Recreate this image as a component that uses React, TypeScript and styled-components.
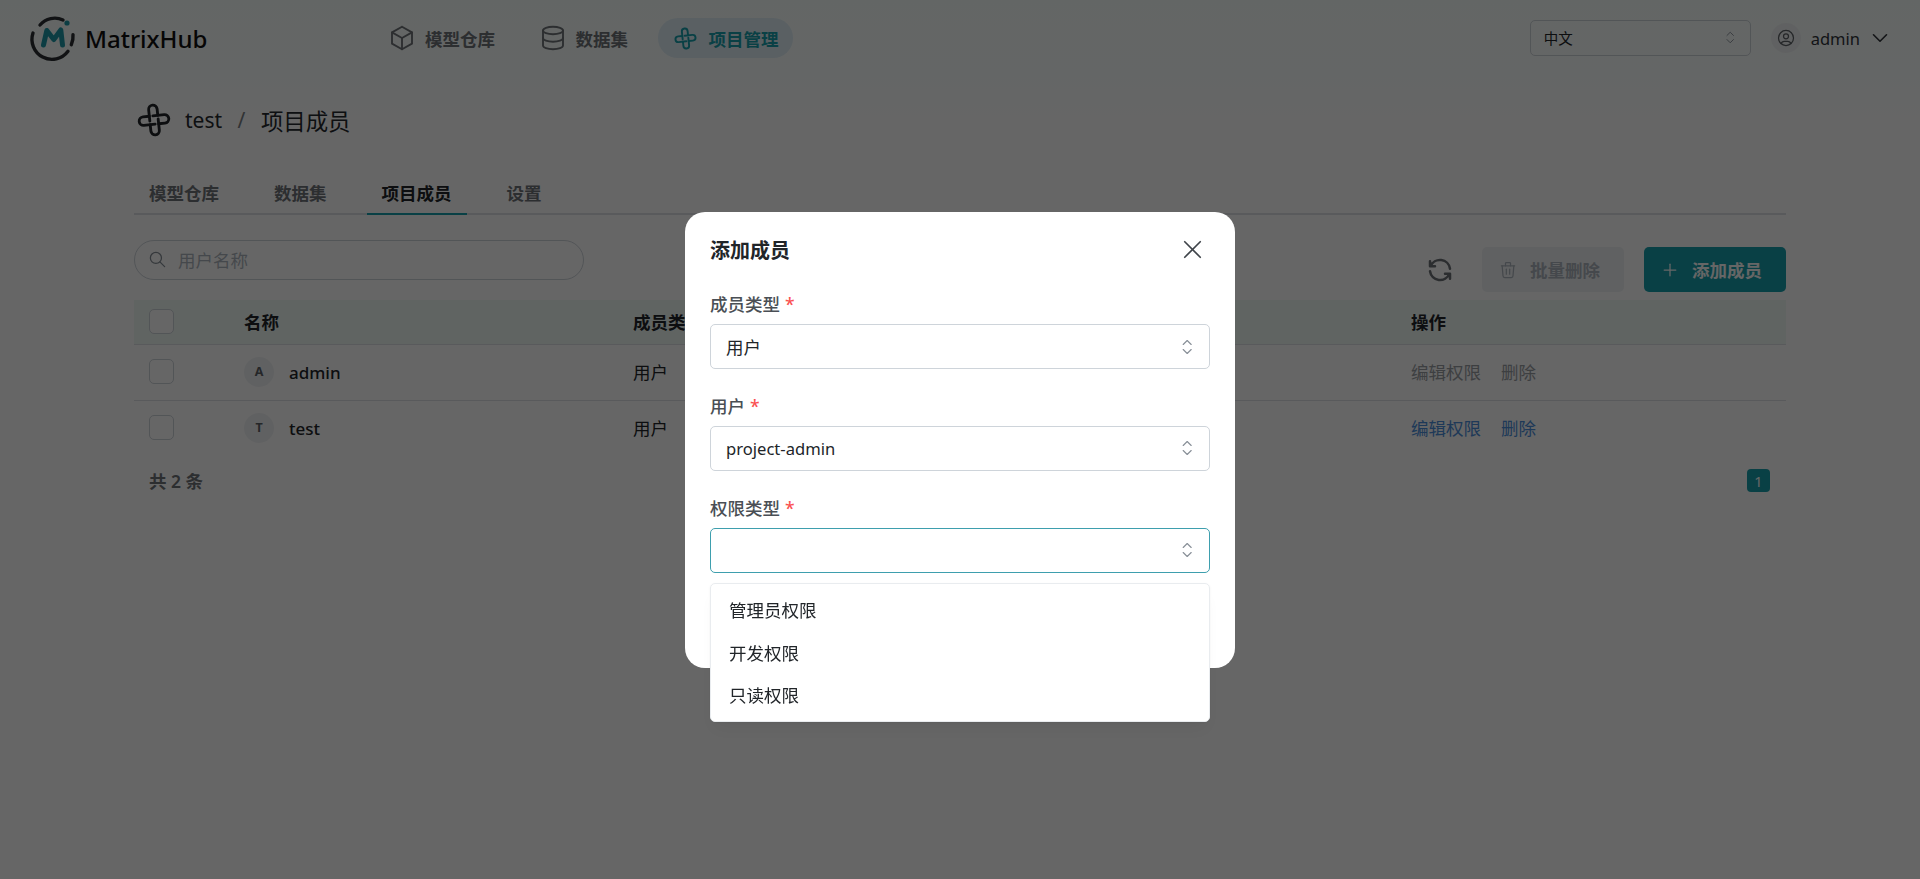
import React from 'react';
import styled, { createGlobalStyle } from 'styled-components';
import {
  TbBox,
  TbChevronDown,
  TbDatabase,
  TbPlus,
  TbRefresh,
  TbSearch,
  TbTrash,
  TbUserCircle,
  TbX,
} from 'react-icons/tb';

const PRIMARY = '#18a0ac';
const FONT = '"Noto Sans", "Noto Sans CJK SC", sans-serif';

const GlobalStyle = createGlobalStyle`
  html, body {
    margin: 0;
    padding: 0;
    background: #fff;
    overflow: hidden;
  }
  * {
    box-sizing: border-box;
  }
  body {
    font-family: ${FONT};
    font-size: 17.5px;
    color: #212529;
  }
`;

const Page = styled.div`
  height: 879px;
  background: linear-gradient(180deg, #f8fffd 0, #fbfffe 76px, #fff 130px);
`;

const Header = styled.header`
  height: 76px;
  display: flex;
  align-items: center;
  padding: 0 27px 0 30px;
`;

const Brand = styled.div`
  width: 344px;
  display: flex;
  align-items: center;
  gap: 15px;
`;

const BrandName = styled.span`
  font-size: 24px;
  font-weight: 500;
  color: #111;
  line-height: 1;
  margin-top: 2px;
`;

const Nav = styled.nav`
  display: flex;
  gap: 15.5px;
`;

const NavItem = styled.a<{ $active?: boolean }>`
  height: 40px;
  display: flex;
  align-items: center;
  gap: 8px;
  padding: 0 14px 0 13px;
  border-radius: 20px;
  font-weight: 600;
  font-size: 17.5px;
  color: ${p => (p.$active ? PRIMARY : '#6f7378')};
  background: ${p => (p.$active ? '#e0f0f8' : 'transparent')};
`;

const NavGlyph = styled.span`
  width: 30px;
  height: 30px;
  display: flex;
  align-items: center;
  justify-content: center;
`;

const HeaderRight = styled.div`
  margin-left: auto;
  display: flex;
  align-items: center;
`;

const LangSelect = styled.div`
  width: 221px;
  height: 36px;
  display: flex;
  align-items: center;
  justify-content: space-between;
  padding: 0 15px 1px 13px;
  border: 1px solid #ced4da;
  border-radius: 5px;
  font-size: 14.5px;
  margin-right: 20px;
`;

const AvatarCircle = styled.div`
  width: 30px;
  height: 30px;
  border-radius: 50%;
  background: #f1f3f5;
  display: flex;
  align-items: center;
  justify-content: center;
  color: #5c6166;
  font-size: 12.5px;
  font-weight: 700;
`;

const UserName = styled.span`
  margin: 0 7px 0 10px;
  font-size: 16.5px;
  color: #30343a;
`;

const Content = styled.main`
  width: 1652px;
  margin: 0 auto;
`;

const Breadcrumb = styled.div`
  display: flex;
  align-items: center;
  height: 34px;
  margin-top: 27px;
  margin-left: 3px;
  font-size: 22.4px;
  color: #25292d;
`;

const CrumbProject = styled.span`
  margin-left: 14px;
  font-size: 21px;
`;

const CrumbSlash = styled.span`
  margin: 0 15.5px;
  font-size: 21px;
  color: #7a7f85;
`;

const TabBar = styled.div`
  display: flex;
  gap: 25px;
  height: 44px;
  margin-top: 34px;
  border-bottom: 2px solid #dee2e6;
`;

const Tab = styled.a<{ $active?: boolean }>`
  padding: 0 15px;
  height: 44px;
  display: flex;
  align-items: center;
  font-weight: 600;
  color: ${p => (p.$active ? '#212529' : '#6f7378')};
  border-bottom: 2px solid ${p => (p.$active ? PRIMARY : 'transparent')};
`;

const Toolbar = styled.div`
  display: flex;
  justify-content: space-between;
  align-items: flex-start;
  height: 60px;
  margin-top: 25px;
`;

const SearchBox = styled.div`
  width: 450px;
  height: 40px;
  display: flex;
  align-items: center;
  gap: 11px;
  padding: 0 0 1px 13px;
  border: 1px solid #ced4da;
  border-radius: 20px;
  color: #adb5bd;
`;

const Actions = styled.div`
  display: flex;
  align-items: center;
  padding-top: 7px;
`;

const RefreshButton = styled.div`
  display: flex;
  color: #6b7076;
  margin-right: 27px;
`;

const ActionButton = styled.div<{ $primary?: boolean }>`
  width: 142px;
  height: 45px;
  display: flex;
  align-items: center;
  gap: 12px;
  padding-left: 16px;
  border-radius: 5px;
  font-weight: 600;
  margin-left: ${p => (p.$primary ? '20px' : '0')};
  background: ${p => (p.$primary ? PRIMARY : '#f1f3f5')};
  color: ${p => (p.$primary ? '#fff' : '#adb5bd')};
`;

const Table = styled.table`
  width: 100%;
  table-layout: fixed;
  border-collapse: collapse;
`;

const HeadRow = styled.tr`
  height: 44px;
  background: #f1faf6;
  border-bottom: 1px solid #dee2e6;
`;

const BodyRow = styled.tr<{ $last?: boolean }>`
  height: 56px;
  border-bottom: ${p => (p.$last ? 'none' : '1px solid #dee2e6')};
`;

const HeadCell = styled.th`
  padding: 0;
  text-align: left;
  font-weight: 700;
  font-size: 17.5px;
  color: #212529;
`;

const Cell = styled.td`
  padding: 0 0 1px;
  font-size: 17.5px;
  color: #212529;
`;

const CheckCell = styled.div`
  padding-left: 15px;
  display: flex;
  align-items: center;
`;

const CheckBox = styled.span`
  width: 25px;
  height: 25px;
  border: 1px solid #ced4da;
  border-radius: 5px;
  background: #fff;
`;

const NameCell = styled.div`
  display: flex;
  align-items: center;
  gap: 15px;
  font-weight: 500;
`;

const MemberName = styled.span`
  font-size: 17px;
  margin-top: 1px;
`;

const LinkRow = styled.div`
  display: flex;
  gap: 20px;
`;

const TableLink = styled.a<{ $disabled?: boolean }>`
  color: ${p => (p.$disabled ? '#9a9ea3' : '#4c8fdc')};
`;

const TableFooter = styled.div`
  display: flex;
  align-items: center;
  justify-content: space-between;
  padding: 12px 16px 0 15px;
`;

const Total = styled.span`
  font-weight: 600;
  color: #6f7378;
`;

const PageNumber = styled.span`
  width: 23px;
  height: 23px;
  display: flex;
  align-items: center;
  justify-content: center;
  border-radius: 4px;
  background: ${PRIMARY};
  color: #fff;
  font-size: 14.5px;
`;

const Overlay = styled.div`
  position: fixed;
  inset: 0;
  background: rgba(0, 0, 0, 0.6);
  display: flex;
  align-items: center;
  justify-content: center;
`;

const Modal = styled.div`
  width: 550px;
  background: #fff;
  border-radius: 20px;
  padding: 0 25px 95px;
`;

const ModalHeader = styled.div`
  height: 80.5px;
  display: flex;
  align-items: center;
  justify-content: space-between;
  padding-bottom: 4px;
`;

const ModalTitle = styled.h2`
  margin: 0;
  font-size: 20px;
  font-weight: 700;
  color: #212529;
`;

const CloseButton = styled.div`
  display: flex;
  color: #3f444a;
  margin-right: 2px;
`;

const Field = styled.div`
  position: relative;
  & + & {
    margin-top: 24.75px;
  }
`;

const Label = styled.label`
  display: block;
  height: 25px;
  line-height: 25px;
  margin-bottom: 7px;
  font-size: 17.5px;
  font-weight: 500;
  color: #4a4f55;
`;

const Required = styled.span`
  color: #fa5252;
  margin-left: 5px;
`;

const SelectBox = styled.div<{ $focused?: boolean }>`
  height: 45px;
  display: flex;
  align-items: center;
  justify-content: space-between;
  padding: 0 17px 0 15px;
  border: 1px solid ${p => (p.$focused ? '#3e9fae' : '#ced4da')};
  border-radius: 5px;
  font-size: 17.5px;
  color: #212529;
`;

const LatinValue = styled.span`
  font-size: 16.6px;
  margin-top: 1px;
`;

const Dropdown = styled.ul`
  position: absolute;
  top: calc(100% + 10px);
  left: 0;
  right: 0;
  margin: 0;
  padding: 5px;
  list-style: none;
  background: #fff;
  border: 1px solid #e9ecef;
  border-radius: 5px;
  box-shadow: 0 1px 3px rgba(0, 0, 0, 0.05), 0 10px 15px -5px rgba(0, 0, 0, 0.05);
`;

const Option = styled.li`
  height: 42.5px;
  display: flex;
  align-items: center;
  padding-left: 13px;
  font-size: 17.5px;
  color: #212529;
`;

const MatrixLogo = () => (
  <svg width="52" height="50" viewBox="0 0 52 50" fill="none" style={{ margin: '-3px -10px -3px -2px' }}>
    <g stroke="#2b2f33" strokeWidth="3.4" strokeLinecap="round">
      <path d="M12 12 A19.5 19.5 0 0 1 35 7" />
      <path d="M5 20 A20 20 0 0 0 40 38.3" />
      <path d="M45 21.7 A20 20 0 0 1 43.3 31.7" />
    </g>
    <path d="M15.5 32 L18.8 17.5 L25.8 26.5 L32.8 17 L34.5 32" stroke="#1e9aa8" strokeWidth="5" strokeLinejoin="round" strokeLinecap="round" />
    <circle cx="39" cy="10" r="2.6" fill="#1e9aa8" />
  </svg>
);

const KnotIcon = ({ size, color, width = 2 }: { size: number; color: string; width?: number }) => (
  <svg width={size} height={size} viewBox="0 0 24 24" fill="none" stroke={color} strokeWidth={width} strokeLinecap="round">
    <g transform="rotate(-6 12 12)">
      <path d="M9 12.5V4.5a3 3 0 0 1 6 0V9" />
      <path d="M11.5 9h7.999a3 3 0 0 1 0 6H15" />
      <path d="M15 11.5v8a3 3 0 0 1-6 0V15" />
      <path d="M12.5 15H4.5a3 3 0 0 1 0-6H9" />
    </g>
  </svg>
);

const SelectorIcon = ({ size = 16 }: { size?: number }) => (
  <svg width={size * 0.65} height={size} viewBox="0 0 10 16" fill="none" stroke="#868e96" strokeWidth="1.1" strokeLinecap="round" strokeLinejoin="round">
    <path d="M1 5.5 5 1.5l4 4" />
    <path d="M1 10.5l4 4 4-4" />
  </svg>
);

const members = [
  { name: 'admin', initial: 'A', locked: true },
  { name: 'test', initial: 'T', locked: false },
];

const App = () => (
  <Page>
    <GlobalStyle />
    <Header>
      <Brand>
        <MatrixLogo />
        <BrandName>MatrixHub</BrandName>
      </Brand>
      <Nav>
        <NavItem><NavGlyph><TbBox size={30} strokeWidth={1.5} /></NavGlyph>模型仓库</NavItem>
        <NavItem><NavGlyph><TbDatabase size={30} strokeWidth={1.5} /></NavGlyph>数据集</NavItem>
        <NavItem $active><NavGlyph><KnotIcon size={23} color={PRIMARY} width={2} /></NavGlyph>项目管理</NavItem>
      </Nav>
      <HeaderRight>
        <LangSelect>中文<SelectorIcon size={13} /></LangSelect>
        <AvatarCircle><TbUserCircle size={20} strokeWidth={1.5} /></AvatarCircle>
        <UserName>admin</UserName>
        <TbChevronDown size={26} strokeWidth={1.5} color="#30343a" />
      </HeaderRight>
    </Header>
    <Content>
      <Breadcrumb>
        <KnotIcon size={34} color="#212529" />
        <CrumbProject>test</CrumbProject>
        <CrumbSlash>/</CrumbSlash>
        <span>项目成员</span>
      </Breadcrumb>
      <TabBar>
        <Tab>模型仓库</Tab>
        <Tab>数据集</Tab>
        <Tab $active>项目成员</Tab>
        <Tab>设置</Tab>
      </TabBar>
      <Toolbar>
        <SearchBox>
          <TbSearch size={19} strokeWidth={1.6} color="#868e96" />
          用户名称
        </SearchBox>
        <Actions>
          <RefreshButton><TbRefresh size={30} strokeWidth={2} /></RefreshButton>
          <ActionButton><TbTrash size={20} strokeWidth={1.5} />批量删除</ActionButton>
          <ActionButton $primary><TbPlus size={20} strokeWidth={1.5} />添加成员</ActionButton>
        </Actions>
      </Toolbar>
      <Table>
        <colgroup>
          <col style={{ width: 110 }} />
          <col style={{ width: 389 }} />
          <col style={{ width: 778 }} />
          <col />
        </colgroup>
        <thead>
          <HeadRow>
            <HeadCell><CheckCell><CheckBox /></CheckCell></HeadCell>
            <HeadCell>名称</HeadCell>
            <HeadCell>成员类型</HeadCell>
            <HeadCell>操作</HeadCell>
          </HeadRow>
        </thead>
        <tbody>
          {members.map((m, i) => (
            <BodyRow key={m.name} $last={i === members.length - 1}>
              <Cell><CheckCell><CheckBox /></CheckCell></Cell>
              <Cell>
                <NameCell>
                  <AvatarCircle>{m.initial}</AvatarCircle>
                  <MemberName>{m.name}</MemberName>
                </NameCell>
              </Cell>
              <Cell>用户</Cell>
              <Cell>
                <LinkRow>
                  <TableLink $disabled={m.locked}>编辑权限</TableLink>
                  <TableLink $disabled={m.locked}>删除</TableLink>
                </LinkRow>
              </Cell>
            </BodyRow>
          ))}
        </tbody>
      </Table>
      <TableFooter>
        <Total>共 2 条</Total>
        <PageNumber>1</PageNumber>
      </TableFooter>
    </Content>
    <Overlay>
      <Modal>
        <ModalHeader>
          <ModalTitle>添加成员</ModalTitle>
          <CloseButton><TbX size={31} strokeWidth={1.3} /></CloseButton>
        </ModalHeader>
        <Field>
          <Label>成员类型<Required>*</Required></Label>
          <SelectBox>用户<SelectorIcon /></SelectBox>
        </Field>
        <Field>
          <Label>用户<Required>*</Required></Label>
          <SelectBox><LatinValue>project-admin</LatinValue><SelectorIcon /></SelectBox>
        </Field>
        <Field>
          <Label>权限类型<Required>*</Required></Label>
          <SelectBox $focused><span /><SelectorIcon /></SelectBox>
          <Dropdown>
            <Option>管理员权限</Option>
            <Option>开发权限</Option>
            <Option>只读权限</Option>
          </Dropdown>
        </Field>
      </Modal>
    </Overlay>
  </Page>
);

export default App;
